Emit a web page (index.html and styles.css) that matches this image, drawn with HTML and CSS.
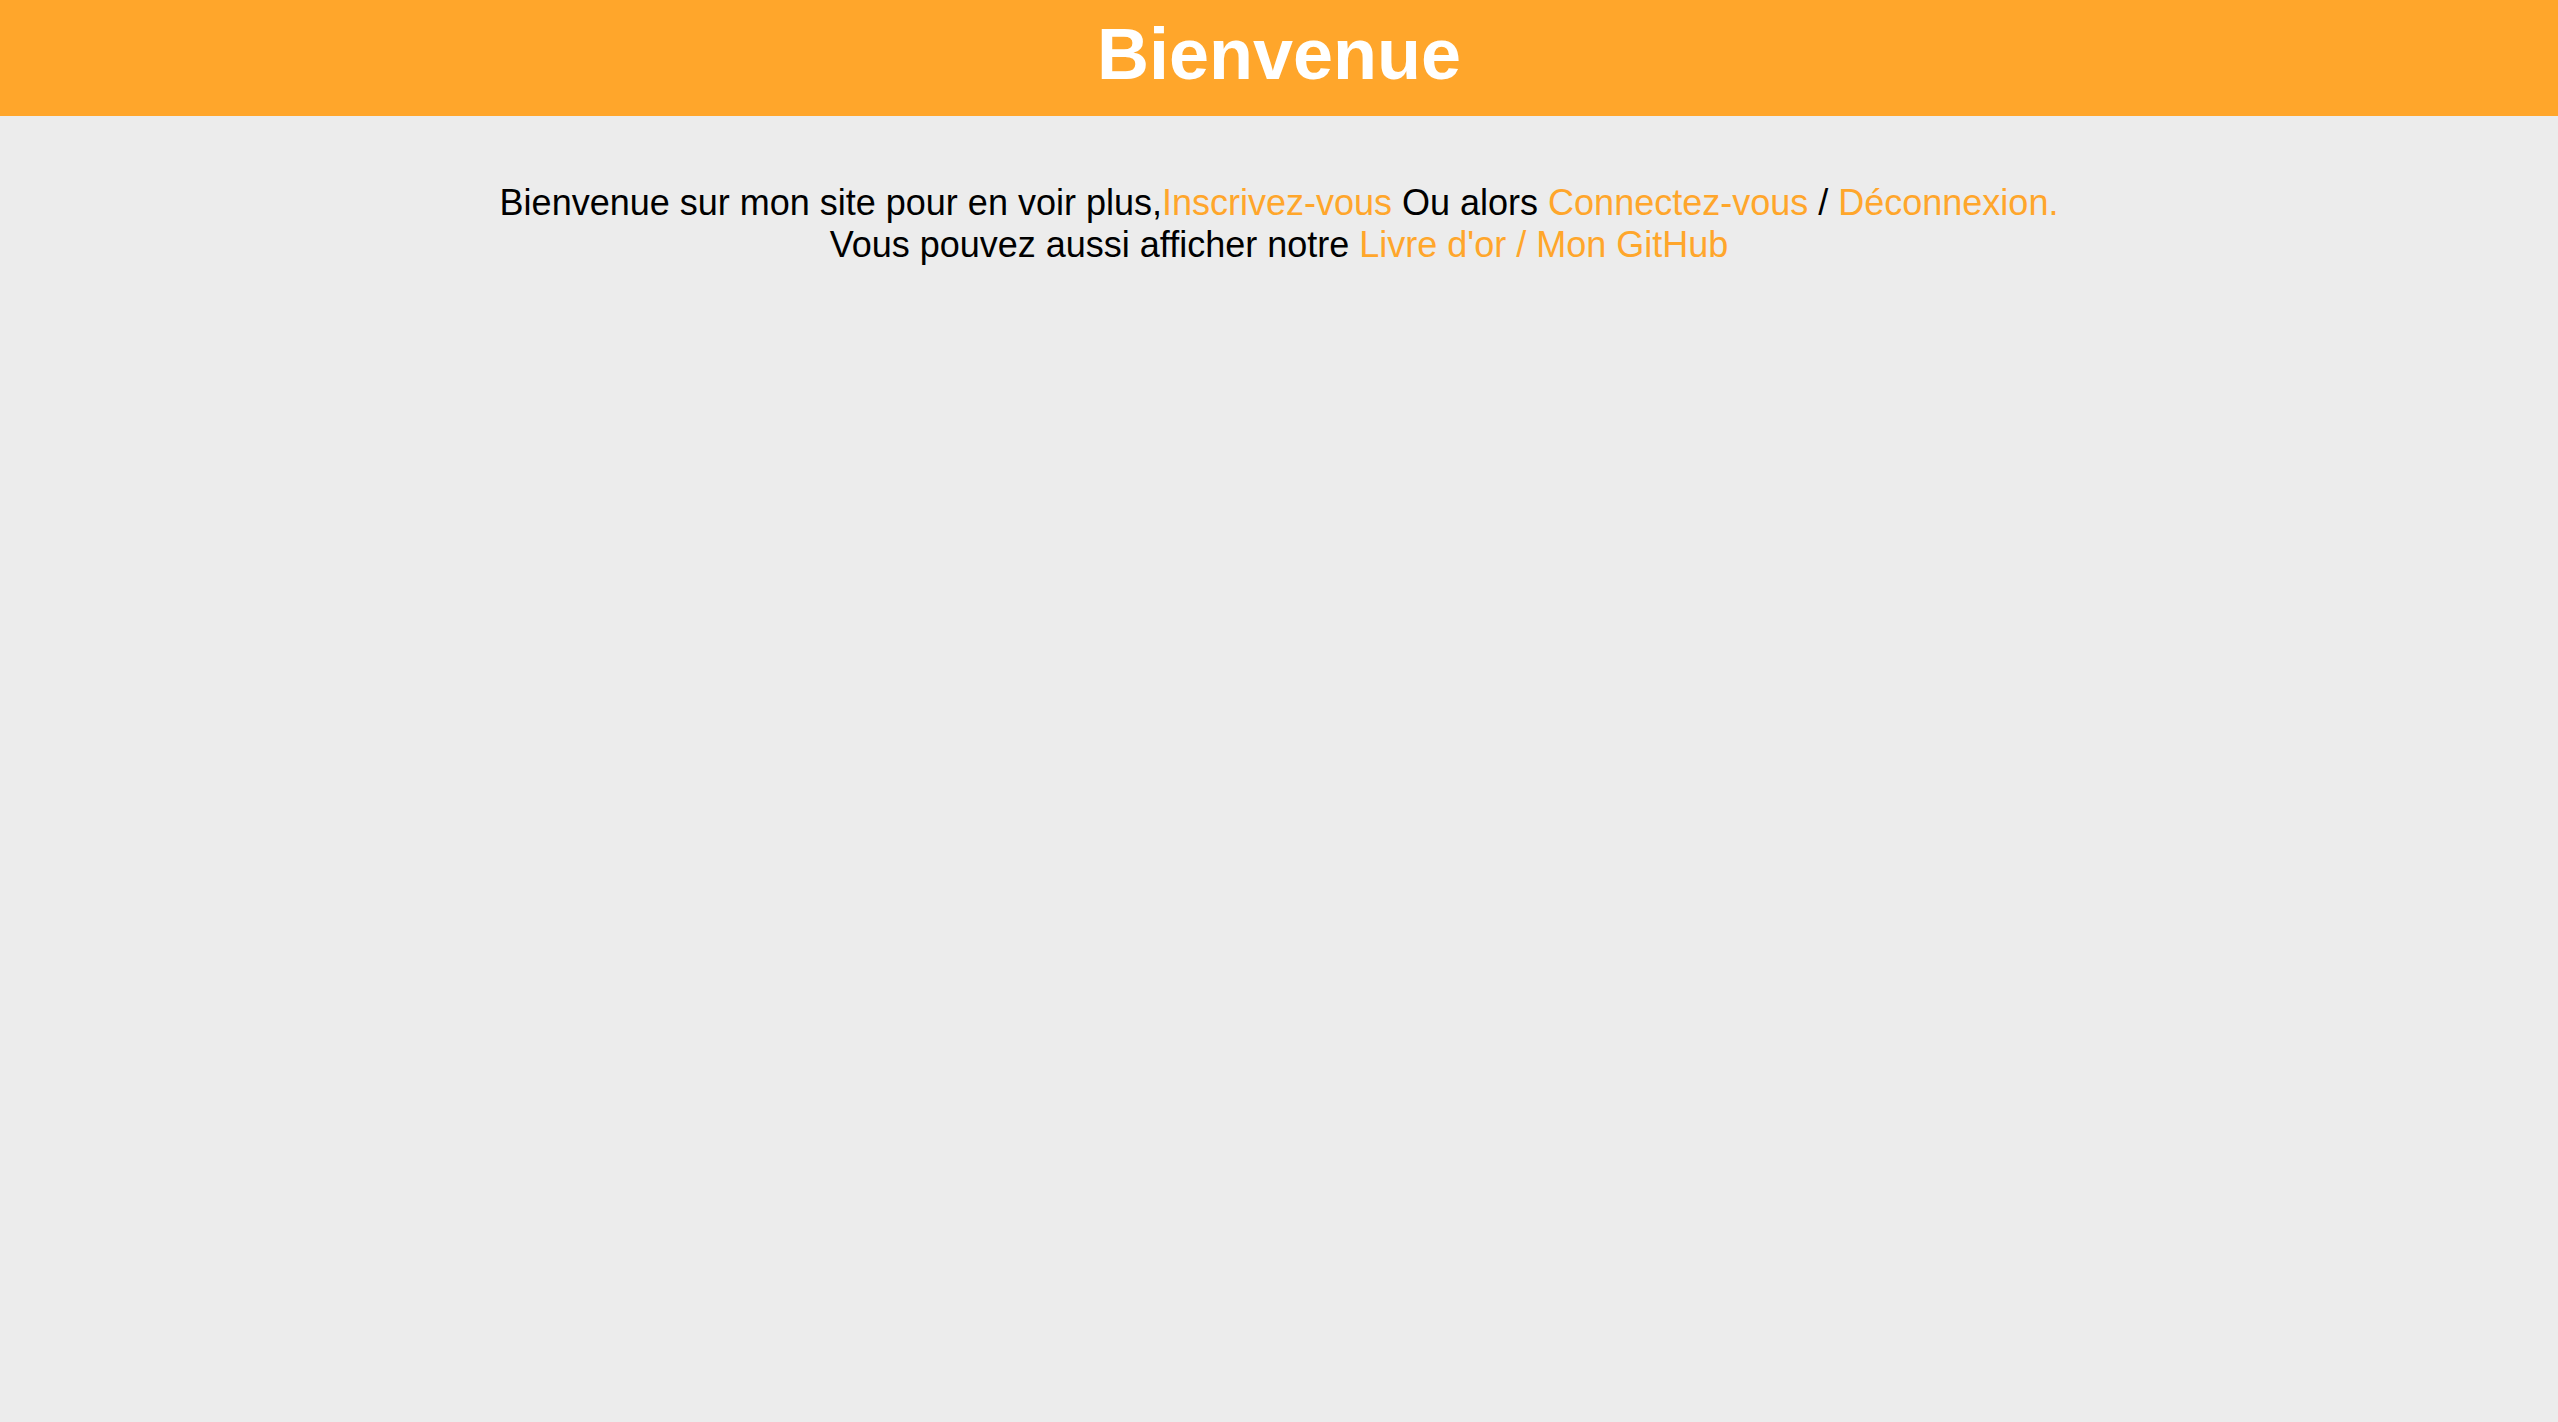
FILE: index.html
```html
<!DOCTYPE html>
<html lang="fr">
<head>
<meta charset="utf-8">
<title>Bienvenue</title>
<link rel="stylesheet" href="styles.css">
</head>
<body>
<header class="top">
  <h1 class="title">Bienvenue</h1>
</header>
<main class="content">
  <p class="intro">Bienvenue sur mon site pour en voir plus,<a href="#">Inscrivez-vous</a> Ou alors <a href="#">Connectez-vous</a> / <a href="#">Déconnexion.</a><br>Vous pouvez aussi afficher notre <a href="#">Livre d'or / Mon GitHub</a></p>
</main>
</body>
</html>
```
FILE: styles.css
```css
html, body {
  margin: 0;
  padding: 0;
}
body {
  background: #ececec;
  font-family: "Liberation Sans", Arial, sans-serif;
  min-height: 100vh;
}
.top {
  background: #ffa62b;
  height: 116px;
  box-sizing: border-box;
  padding-bottom: 8px;
  display: flex;
  align-items: center;
  justify-content: center;
}
.title {
  margin: 0;
  color: #ffffff;
  font-size: 72px;
  font-weight: bold;
  line-height: 1;
}
.content {
  padding-top: 66px;
}
.intro {
  margin: 0;
  text-align: center;
  font-size: 36px;
  color: #000;
}
.intro a {
  color: #ffa62b;
  text-decoration: none;
}
```
